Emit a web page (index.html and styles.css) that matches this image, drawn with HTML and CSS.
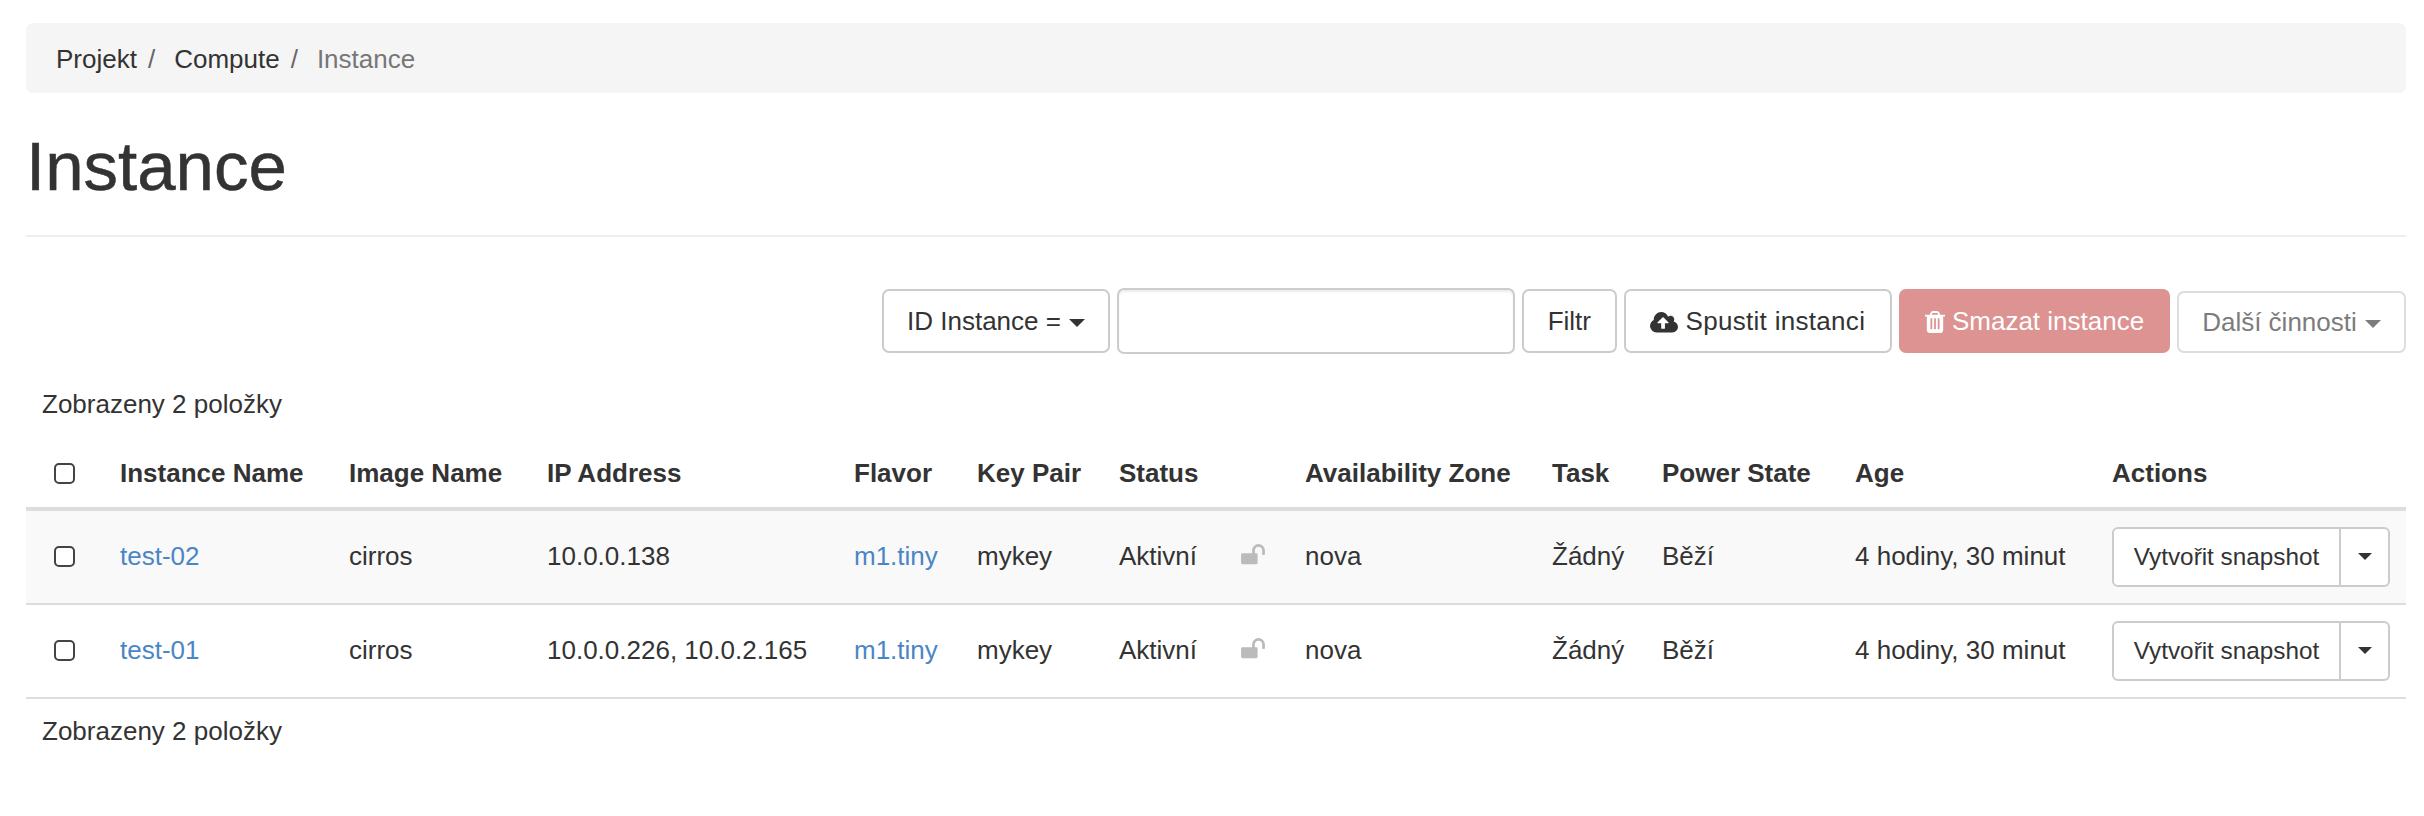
FILE: index.html
```html
<!DOCTYPE html>
<html lang="cs">
<head>
    <meta charset="UTF-8">
    <title>Instance</title>
    <link rel="stylesheet" href="styles.css">
</head>
<body>
    <ol class="breadcrumb">
        <li>Projekt</li>
        <li>Compute</li>
        <li class="active">Instance</li>
    </ol>
    <div class="page-header">
        <h1>Instance</h1>
    </div>

    <form class="toolbar">
        <button type="button" class="btn btn-filter-field">ID Instance = <span class="caret"></span></button>
        <input type="text" class="search">
        <button type="button" class="btn">Filtr</button>
        <button type="button" class="btn btn-launch">
            <svg class="icon icon-cloud" viewBox="0 128 1920 1408"><path d="M1280 864q0-14-9-23l-352-352q-9-9-23-9t-23 9l-351 351q-10 12-10 24 0 14 9 23t23 9h224v352q0 13 9.500 22.500t22.500 9.500h192q13 0 22.500-9.500t9.500-22.500v-352h224q13 0 22.500-9.500t9.500-22.500zm640 288q0 159-112.500 271.500t-271.500 112.500h-1088q-185 0-316.500-131.500t-131.500-316.500q0-130 70-240t188-165q-2-30-2-43 0-212 150-362t362-150q156 0 285.500 87t188.500 231q71-62 166-62 106 0 181 75t75 181q0 76-41 138 130 31 213.500 135.500t83.500 238.500z"/></svg>
            Spustit instanci
        </button>
        <button type="button" class="btn btn-danger">
            <svg class="icon icon-trash" viewBox="0 0 1408 1536"><path d="M512 1248v-704q0-14-9-23t-23-9h-64q-14 0-23 9t-9 23v704q0 14 9 23t23 9h64q14 0 23-9t9-23zm256 0v-704q0-14-9-23t-23-9h-64q-14 0-23 9t-9 23v704q0 14 9 23t23 9h64q14 0 23-9t9-23zm256 0v-704q0-14-9-23t-23-9h-64q-14 0-23 9t-9 23v704q0 14 9 23t23 9h64q14 0 23-9t9-23zm-544-992h448l-48-117q-7-9-17-11h-317q-10 2-17 11zm928 32v64q0 14-9 23t-23 9h-96v948q0 83-47 143.500t-113 60.500h-832q-66 0-113-58.500t-47-141.500v-952h-96q-14 0-23-9t-9-23v-64q0-14 9-23t23-9h309l70-167q15-37 54-63t79-26h320q40 0 79 26t54 63l70 167h309q14 0 23 9t9 23z"/></svg>
            Smazat instance
        </button>
        <button type="button" class="btn btn-disabled">Další činnosti <span class="caret"></span></button>
    </form>

    <p class="summary">Zobrazeny 2 položky</p>

    <table class="instances">
        <colgroup>
            <col class="col-check"><col class="col-name"><col class="col-image"><col class="col-ip">
            <col class="col-flavor"><col class="col-key"><col class="col-status"><col class="col-lock">
            <col class="col-zone"><col class="col-task"><col class="col-power"><col class="col-age"><col class="col-actions">
        </colgroup>
        <thead>
            <tr>
                <th class="cell-check"><input type="checkbox" class="check"></th>
                <th>Instance Name</th>
                <th>Image Name</th>
                <th>IP Address</th>
                <th>Flavor</th>
                <th>Key Pair</th>
                <th>Status</th>
                <th></th>
                <th>Availability Zone</th>
                <th>Task</th>
                <th>Power State</th>
                <th>Age</th>
                <th>Actions</th>
            </tr>
        </thead>
        <tbody>
            <tr>
                <td class="cell-check"><input type="checkbox" class="check"></td>
                <td><a href="#">test-02</a></td>
                <td>cirros</td>
                <td>10.0.0.138</td>
                <td><a href="#">m1.tiny</a></td>
                <td>mykey</td>
                <td>Aktivní</td>
                <td><svg class="lock" viewBox="0 0 1664 1536"><path d="M1664 448v256q0 26-19 45t-45 19h-64q-26 0-45-19t-19-45v-256q0-106-75-181t-181-75-181 75-75 181v192h96q40 0 68 28t28 68v576q0 40-28 68t-68 28h-960q-40 0-68-28t-28-68v-576q0-40 28-68t68-28h672v-192q0-185 131.500-316.500t316.500-131.500 316.500 131.500 131.500 316.500z"/></svg></td>
                <td>nova</td>
                <td>Žádný</td>
                <td>Běží</td>
                <td>4 hodiny, 30 minut</td>
                <td>
                    <div class="btn-group">
                        <button type="button" class="btn-sm">Vytvořit snapshot</button>
                        <button type="button" class="btn-sm btn-toggle"><span class="caret"></span></button>
                    </div>
                </td>
            </tr>
            <tr>
                <td class="cell-check"><input type="checkbox" class="check"></td>
                <td><a href="#">test-01</a></td>
                <td>cirros</td>
                <td>10.0.0.226, 10.0.2.165</td>
                <td><a href="#">m1.tiny</a></td>
                <td>mykey</td>
                <td>Aktivní</td>
                <td><svg class="lock" viewBox="0 0 1664 1536"><path d="M1664 448v256q0 26-19 45t-45 19h-64q-26 0-45-19t-19-45v-256q0-106-75-181t-181-75-181 75-75 181v192h96q40 0 68 28t28 68v576q0 40-28 68t-68 28h-960q-40 0-68-28t-28-68v-576q0-40 28-68t68-28h672v-192q0-185 131.500-316.500t316.500-131.500 316.500 131.500 131.500 316.500z"/></svg></td>
                <td>nova</td>
                <td>Žádný</td>
                <td>Běží</td>
                <td>4 hodiny, 30 minut</td>
                <td>
                    <div class="btn-group">
                        <button type="button" class="btn-sm">Vytvořit snapshot</button>
                        <button type="button" class="btn-sm btn-toggle"><span class="caret"></span></button>
                    </div>
                </td>
            </tr>
        </tbody>
    </table>

    <p class="summary summary-bottom">Zobrazeny 2 položky</p>
</body>
</html>
```

FILE: styles.css
```css
body {
    font-family: 'Liberation Sans', Arial, sans-serif;
    font-size: 26px;
    color: #333333;
    background-color: #ffffff;
    margin: 0;
    padding: 23px 18px 0 26px;
}
.breadcrumb {
    display: flex;
    align-items: center;
    height: 68px;
    margin: 0;
    padding: 2px 30px 0;
    list-style: none;
    background-color: #f5f5f5;
    border-radius: 7px;
}
.breadcrumb li {
    margin-right: 19px;
}
.breadcrumb li::after {
    content: "/";
    padding-left: 11px;
    color: #666666;
}
.breadcrumb .active {
    color: #777777;
}
.breadcrumb .active::after {
    content: none;
}
.page-header {
    height: 142px;
    border-bottom: 2px solid #eeeeee;
}
h1 {
    margin: 0;
    padding-top: 37px;
    font-size: 69px;
    font-weight: 400;
    line-height: 74px;
    -webkit-text-stroke: 0.5px #333333;
}

.toolbar {
    display: flex;
    justify-content: flex-end;
    align-items: flex-start;
    gap: 7px;
    margin-top: 52px;
}
.btn {
    height: 64px;
    padding: 0 23.500px;
    font-family: inherit;
    font-size: 26px;
    color: #333333;
    white-space: nowrap;
    background-color: #ffffff;
    border: 2px solid #cccccc;
    border-radius: 7px;
}
.btn-filter-field {
    padding: 0 23px;
}
.btn-launch {
    padding: 0 24.500px;
    letter-spacing: 0.3px;
}
.btn-danger {
    padding: 0 24px;
    color: #ffffff;
    background-color: #dc9391;
    border-color: #dc9391;
}
.btn-disabled {
    height: 62px;
    margin-top: 2px;
    padding: 0 23px;
    color: #7c7c7c;
    border-color: #dddddd;
}
.search {
    width: 398px;
    height: 66px;
    margin-top: -1px;
    box-sizing: border-box;
    border: 2px solid #cccccc;
    border-radius: 7px;
    box-shadow: inset 0 2px 2px rgba(0,0,0,0.075);
}
.caret {
    display: inline-block;
    width: 0;
    height: 0;
    margin-left: 1px;
    vertical-align: middle;
    border-top: 8px solid currentColor;
    border-left: 8px solid transparent;
    border-right: 8px solid transparent;
}
.icon {
    vertical-align: -3px;
    fill: currentColor;
}
.icon-cloud {
    width: 28px;
    height: 20.500px;
}
.icon-trash {
    width: 20px;
    height: 22px;
}

.summary {
    margin: 0;
    padding: 31.500px 16px 0;
    line-height: 37px;
}
.summary-bottom {
    padding-top: 14px;
}

.instances {
    width: 2380px;
    margin-top: 14px;
    table-layout: fixed;
    border-collapse: collapse;
}
.col-check { width: 79px; }
.col-name { width: 229px; }
.col-image { width: 198px; }
.col-ip { width: 307px; }
.col-flavor { width: 123px; }
.col-key { width: 142px; }
.col-status { width: 122px; }
.col-lock { width: 64px; }
.col-zone { width: 247px; }
.col-task { width: 110px; }
.col-power { width: 193px; }
.col-age { width: 257px; }
.col-actions { width: 309px; }

.instances th,
.instances td {
    padding: 0 15px;
    text-align: left;
    white-space: nowrap;
    vertical-align: middle;
}
.instances th {
    height: 66px;
    padding-top: 4px;
    font-weight: 700;
    border-bottom: 4px solid #dddddd;
}
.instances td {
    height: 92px;
    border-bottom: 2px solid #dddddd;
}
.instances tbody tr:first-child td {
    background-color: #f9f9f9;
}
.instances .cell-check {
    padding-left: 28px;
    padding-right: 0;
}
.instances a {
    color: #4a86c5;
    text-decoration: none;
}
.check {
    appearance: none;
    display: block;
    width: 21px;
    height: 21px;
    margin: 0;
    background-color: #ffffff;
    border: 2px solid #444444;
    border-radius: 5px;
}
.lock {
    display: block;
    width: 24px;
    height: 22px;
    margin-top: -3px;
    fill: #bbbbbb;
}
.btn-group {
    display: flex;
    width: 278px;
}
.btn-sm {
    flex: 1;
    height: 60px;
    padding: 0;
    font-family: inherit;
    font-size: 24.300px;
    color: #333333;
    background-color: #ffffff;
    border: 2px solid #cccccc;
    border-radius: 6px 0 0 6px;
}
.btn-toggle {
    flex: 0 0 49px;
    border-left: none;
    border-radius: 0 6px 6px 0;
}
.btn-toggle .caret {
    display: block;
    margin: 0 auto;
    border-top-width: 7px;
    border-left-width: 7px;
    border-right-width: 7px;
}
```
